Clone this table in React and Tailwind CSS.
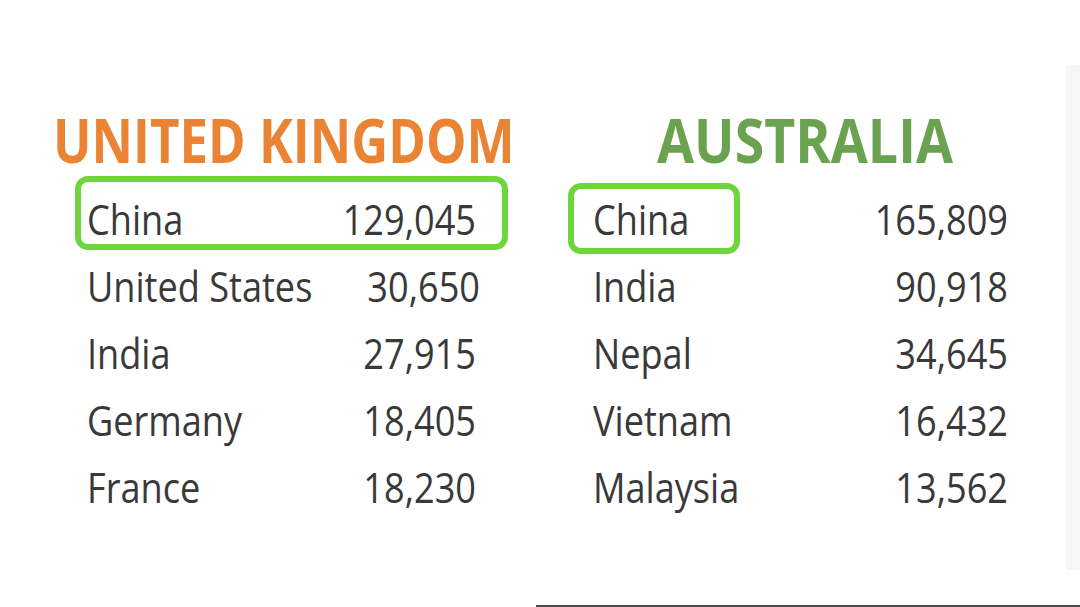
import React from 'react';

const uk = [
    ['China', '129,045'],
    ['United States', '30,650'],
    ['India', '27,915'],
    ['Germany', '18,405'],
    ['France', '18,230'],
];

const au = [
    ['China', '165,809'],
    ['India', '90,918'],
    ['Nepal', '34,645'],
    ['Vietnam', '16,432'],
    ['Malaysia', '13,562'],
];

const font = { fontFamily: '"Open Sans", "Noto Sans", sans-serif' };

const Name = ({ children }) => (
    <span className="inline-block origin-left scale-x-[0.86] whitespace-nowrap">{children}</span>
);

const Num = ({ children }) => (
    <span className="inline-block origin-right scale-x-[0.86] whitespace-nowrap">{children}</span>
);

const App = () => {
    return (
        <div className="relative w-[1080px] h-[607px] overflow-hidden bg-white text-[#393939]" style={font}>
            {/* faint slide edge on the right */}
            <div className="absolute right-0 top-[65px] w-[14px] h-[505px] bg-[#f6f6f6]" />
            {/* bottom rule */}
            <div className="absolute left-[536px] right-0 bottom-0 h-[2px] bg-[#4a4a4a]" />

            <div className="flex pl-[53px] pt-[110px]">
                {/* United Kingdom */}
                <div className="w-[515px]">
                    <h2 className="h-[60px] text-[60px] leading-[60px] font-bold text-[#ea8434] whitespace-nowrap">
                        <span className="inline-block origin-left scale-x-[0.85]">UNITED KINGDOM</span>
                    </h2>
                    <div className="mt-[15px] ml-[22px] w-[433px] flex flex-col text-[42px] leading-[67px]">
                        {uk.map(([name, value], i) =>
                            i === 0 ? (
                                <div key={name} className="h-[67px] flex flex-col">
                                    <div className="-mt-[9px] h-[74px] border-[6px] border-[#6ed63c] rounded-[13px] flex pl-[6px] pr-[26px]">
                                        <div className="mt-[3px] h-[67px] flex w-full justify-between">
                                            <Name>{name}</Name>
                                            <Num>{value}</Num>
                                        </div>
                                    </div>
                                </div>
                            ) : (
                                <div key={name} className="h-[67px] flex justify-between pl-[12px] pr-[32px]">
                                    <Name>{name}</Name>
                                    <Num>{value}</Num>
                                </div>
                            )
                        )}
                    </div>
                </div>

                {/* Australia */}
                <div className="w-[440px]">
                    <h2 className="h-[60px] pl-[89px] text-[60px] leading-[60px] font-bold text-[#6ba250] whitespace-nowrap">
                        <span className="inline-block origin-left scale-x-[0.895]">AUSTRALIA</span>
                    </h2>
                    <div className="mt-[15px] w-[440px] flex flex-col text-[42px] leading-[67px]">
                        {au.map(([name, value], i) =>
                            i === 0 ? (
                                <div key={name} className="h-[67px] flex justify-between items-start">
                                    <div className="-mt-[2px] w-[172px] h-[71px] border-[6px] border-[#6ed63c] rounded-[13px] pl-[19px] flex flex-col">
                                        <div className="-mt-[4px] h-[67px]">
                                            <Name>{name}</Name>
                                        </div>
                                    </div>
                                    <Num>{value}</Num>
                                </div>
                            ) : (
                                <div key={name} className="h-[67px] flex justify-between pl-[25px]">
                                    <Name>{name}</Name>
                                    <Num>{value}</Num>
                                </div>
                            )
                        )}
                    </div>
                </div>
            </div>
        </div>
    );
};

export default App;
